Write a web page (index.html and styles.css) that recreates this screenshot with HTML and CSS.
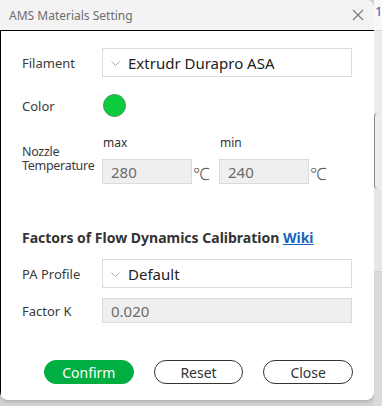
FILE: index.html
```html
<!DOCTYPE html>
<html lang="en">
<head>
    <meta charset="UTF-8">
    <meta name="viewport" content="width=device-width, initial-scale=1.0">
    <title>AMS Materials Setting</title>
    <link rel="stylesheet" href="styles.css">
</head>
<body>
    <div class="screen">
        <div class="dialog">
            <div class="titlebar">
                <span class="title">AMS Materials Setting</span>
                <svg class="close" width="12" height="12" viewBox="0 0 12 12" fill="none" stroke="#777" stroke-width="1.1">
                    <line x1="1" y1="1" x2="11" y2="11"></line>
                    <line x1="11" y1="1" x2="1" y2="11"></line>
                </svg>
            </div>

            <div class="content">
                <div class="row">
                    <label class="label">Filament</label>
                    <div class="combo">
                        <svg class="chevron" width="9" height="5" viewBox="0 0 9 5" fill="none" stroke="#aaa" stroke-width="1">
                            <polyline points="0.5,0.5 4.5,4.5 8.5,0.5"></polyline>
                        </svg>
                        <span>Extrudr Durapro ASA</span>
                    </div>
                </div>

                <div class="row row-color">
                    <label class="label">Color</label>
                    <span class="swatch"></span>
                </div>

                <div class="temp">
                    <label class="label label-two">Nozzle<br>Temperature</label>
                    <div class="temp-field">
                        <span class="caption">max</span>
                        <div class="temp-input">
                            <div class="field">280</div>
                            <span class="unit">&#8451;</span>
                        </div>
                    </div>
                    <div class="temp-field">
                        <span class="caption">min</span>
                        <div class="temp-input">
                            <div class="field">240</div>
                            <span class="unit">&#8451;</span>
                        </div>
                    </div>
                </div>

                <h2 class="section">Factors of Flow Dynamics Calibration <a href="#" class="wiki">Wiki</a></h2>

                <div class="row row-pa">
                    <label class="label">PA Profile</label>
                    <div class="combo">
                        <svg class="chevron" width="9" height="5" viewBox="0 0 9 5" fill="none" stroke="#aaa" stroke-width="1">
                            <polyline points="0.5,0.5 4.5,4.5 8.5,0.5"></polyline>
                        </svg>
                        <span>Default</span>
                    </div>
                </div>

                <div class="row row-k">
                    <label class="label">Factor K</label>
                    <div class="field field-wide">0.020</div>
                </div>

                <div class="buttons">
                    <button class="btn btn-confirm">Confirm</button>
                    <button class="btn">Reset</button>
                    <button class="btn">Close</button>
                </div>
            </div>
        </div>

        <div class="side">
            <div class="side-top">1</div>
            <div class="side-band"></div>
            <div class="side-box"></div>
            <div class="side-mid"></div>
            <div class="side-low"></div>
        </div>
    </div>
</body>
</html>
```

FILE: styles.css
```css
:root {
    --green: #00ae42;
    --text: #333;
    --muted: #6b6b6b;
    --line: #dbdbdb;
    --disabled: #efefef;
}

body {
    margin: 0;
    padding: 0;
    font-family: 'Noto Sans', 'Open Sans', sans-serif;
    background-color: #d2d2d2;
    color: var(--text);
}

.screen {
    display: flex;
    width: 382px;
    height: 406px;
    overflow: hidden;
}

.dialog {
    width: 374px;
    height: 400px;
    background: #fff;
    border-radius: 0 8px 8px 8px;
    display: flex;
    flex-direction: column;
    flex-shrink: 0;
    overflow: hidden;
    box-shadow: 0 2px 3px rgba(0, 0, 0, 0.15);
}

.titlebar {
    height: 30px;
    background: #f3f3f3;
    display: flex;
    align-items: center;
    justify-content: space-between;
    padding: 0 8px 0 9px;
    border-radius: 0 8px 0 0;
}

.title {
    font-size: 12px;
    color: #6e6e6e;
}

.close {
    margin-right: 2px;
}

.content {
    flex: 1;
    border-top: 1px solid #000;
    border-left: 1px solid #000;
    padding: 17px 21px 0 21px;
}

.row {
    display: flex;
    align-items: center;
}

.label {
    width: 80px;
    font-size: 13px;
    color: #3a3a3a;
    flex-shrink: 0;
}

.label-two {
    line-height: 14px;
    padding-top: 11px;
    font-size: 12.5px;
    letter-spacing: -0.3px;
}

.combo {
    width: 250px;
    height: 29px;
    box-sizing: border-box;
    border: 1px solid var(--line);
    display: flex;
    align-items: center;
    gap: 8px;
    padding-left: 8px;
    font-size: 15px;
    color: #222;
}

.chevron {
    margin-top: 1px;
}

.row-color {
    margin-top: 17px;
}

.swatch {
    width: 21px;
    height: 21px;
    border-radius: 50%;
    background: #0ccb3c;
    border: 1px solid #4a9a58;
    margin-left: 1px;
}

.temp {
    display: flex;
    margin-top: 17px;
}

.temp-field {
    display: flex;
    flex-direction: column;
    width: 117px;
}

.caption {
    font-size: 12px;
    color: #333;
    line-height: 18px;
    height: 25px;
    padding-left: 1px;
}

.temp-input {
    display: flex;
    align-items: center;
    height: 25px;
}

.field {
    width: 90px;
    height: 25px;
    box-sizing: border-box;
    background: var(--disabled);
    border: 1px solid var(--line);
    display: flex;
    align-items: center;
    padding-left: 8px;
    font-size: 15px;
    color: var(--muted);
}

.unit {
    font-size: 17px;
    font-weight: 300;
    color: #555;
    padding-left: 1px;
    margin-top: 3px;
}

.section {
    margin: 44px 0 0 0;
    font-size: 14px;
    font-weight: bold;
    color: #333;
    height: 20px;
}

.wiki {
    color: #1565c0;
    text-decoration: underline;
}

.row-pa {
    margin-top: 11px;
}

.row-k {
    margin-top: 10px;
}

.field-wide {
    width: 250px;
}

.buttons {
    display: flex;
    gap: 20px;
    margin-top: 37px;
    padding-left: 22px;
}

.btn {
    width: 90px;
    height: 24px;
    border-radius: 12px;
    border: 1px solid #333;
    background: #fff;
    font-family: inherit;
    font-size: 14px;
    color: #333;
    padding: 0;
    cursor: pointer;
}

.btn-confirm {
    background: var(--green);
    border-color: var(--green);
    color: #fff;
}

.side {
    flex: 1;
    display: flex;
    flex-direction: column;
    background: #e4e4e4;
}

.side-top {
    height: 30px;
    background: #f8f8f8;
    border-bottom: 1px solid #d8d8d8;
    font-size: 13px;
    color: #1565c0;
    padding-left: 1px;
    line-height: 22px;
    overflow: hidden;
}

.side-band {
    height: 82px;
    background: #ececec;
}

.side-box {
    height: 76px;
    border-left: 1px solid #888;
    border-radius: 4px 0 0 4px;
    background: #ececec;
}

.side-mid {
    height: 82px;
    background: #e6e6e6;
    border-bottom: 1px solid #d0d0d0;
}

.side-low {
    flex: 1;
    background: #dadada;
}
```
